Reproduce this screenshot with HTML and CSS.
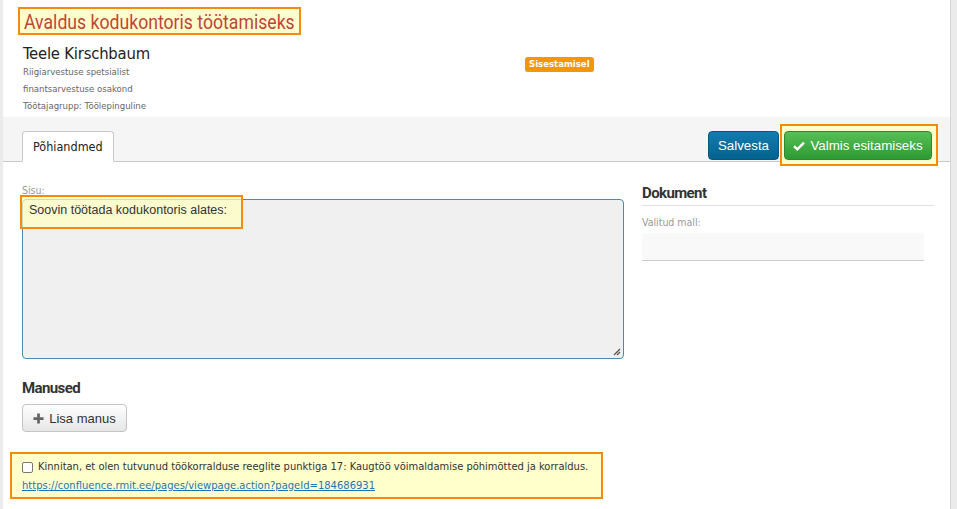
FILE: index.html
```html
<!DOCTYPE html>
<html lang="et">
<head>
<meta charset="utf-8">
<title>Avaldus kodukontoris töötamiseks</title>
<link rel="stylesheet" href="styles.css">
</head>
<body>
<div class="page">
  <header class="header">
    <h1 class="title"><span class="hl title-box"><span class="title-text">Avaldus kodukontoris töötamiseks</span></span></h1>
    <div class="person-row">
      <div class="person">
        <div class="person-name">Teele Kirschbaum</div>
        <div class="person-line">Riigiarvestuse spetsialist</div>
        <div class="person-line">finantsarvestuse osakond</div>
        <div class="person-line">Töötajagrupp: Töölepinguline</div>
      </div>
      <div class="status"><span class="badge">Sisestamisel</span></div>
    </div>
  </header>

  <div class="tabbar">
    <div class="tabs">
      <div class="tab active">Põhiandmed</div>
    </div>
    <div class="actions">
      <button class="btn btn-primary">Salvesta</button>
      <span class="hl actions-box">
        <button class="btn btn-success">
          <svg class="icon-check" viewBox="0 0 12 10" width="12" height="10"><path d="M1 5.2 L4.3 8.3 L11 1.6" fill="none" stroke="#fff" stroke-width="2.4"/></svg>
          Valmis esitamiseks
        </button>
      </span>
    </div>
  </div>

  <div class="content">
    <div class="main-col">
      <label class="field-label">Sisu:</label>
      <div class="textarea">
        <span class="hl ta-box">Soovin töötada kodukontoris alates:</span>
        <svg class="resize" viewBox="0 0 8 8" width="8" height="8"><path d="M7 1 L1 7 M7 4 L4 7" stroke="#555" stroke-width="1.3"/></svg>
      </div>

      <h3 class="section-title">Manused</h3>
      <button class="btn btn-default">
        <svg class="icon-plus" viewBox="0 0 12 12" width="11" height="11"><path d="M6 0.5 V11.5 M0.5 6 H11.5" stroke="#666" stroke-width="3"/></svg>
        Lisa manus
      </button>
    </div>

    <aside class="side-col">
      <h3 class="doc-title">Dokument</h3>
      <label class="field-label">Valitud mall:</label>
      <div class="select-field"></div>
    </aside>
  </div>

  <div class="confirm hl">
    <label class="confirm-line"><span class="checkbox"></span>Kinnitan, et olen tutvunud töökorralduse reeglite punktiga 17: Kaugtöö võimaldamise põhimõtted ja korraldus.</label>
    <a class="confirm-link" href="#">https://confluence.rmit.ee/pages/viewpage.action?pageId=184686931</a>
  </div>
</div>
</body>
</html>
```

FILE: styles.css
```css
* { box-sizing: border-box; }

html, body {
  margin: 0;
  padding: 0;
}

body {
  background: #ebebeb;
  font-family: "DejaVu Sans Condensed", "DejaVu Sans", Verdana, sans-serif;
  color: #333;
  height: 509px;
  overflow: hidden;
}

.page {
  margin-left: 3px;
  width: 948px;
  height: 509px;
  background: #fff;
  border-right: 1px solid #d6d6d6;
}

.hl {
  border: 2px solid #f58a0b;
  background: #ffffcc;
}

/* header */
.header {
  padding: 7px 0 0 15px;
  height: 117px;
}

.title {
  margin: 0;
  font-weight: normal;
  line-height: 0;
}

.title-box {
  display: inline-block;
  width: 283px;
  height: 28px;
  padding: 2px 0 0 4px;
  white-space: nowrap;
  overflow: hidden;
}

.title-text {
  display: inline-block;
  font-family: Roboto, "Liberation Sans", sans-serif;
  font-size: 21px;
  line-height: 23px;
  color: #c0443a;
  transform: scaleX(0.84);
  transform-origin: left center;
}

.person-row {
  display: flex;
  margin-top: 10px;
  padding-left: 5px;
}

.person {
  width: 502px;
}

.person-name {
  font-size: 16.5px;
  letter-spacing: -0.2px;
  color: #222;
  line-height: 18px;
}

.person-line {
  font-size: 9.5px;
  color: #666;
  line-height: 17px;
}

.person-line:first-of-type { margin-top: 3px; }

.status {
  padding-top: 7px;
}

.badge {
  display: inline-block;
  background: #f89406;
  color: #fff;
  font-size: 9.5px;
  font-weight: bold;
  padding: 1px 4px 2px;
  border-radius: 3px;
  line-height: 12px;
}

/* tab bar */
.tabbar {
  display: flex;
  justify-content: space-between;
  align-items: flex-end;
  height: 45px;
  background: #f5f5f5;
  border-bottom: 1px solid #c8c8c8;
  padding: 0 12px 0 19px;
}

.tabs { display: flex; }

.tab {
  height: 31px;
  margin-bottom: -1px;
  padding: 7px 10px 0 10px;
  font-size: 12.5px;
  color: #222;
  background: #fff;
  border: 1px solid #c8c8c8;
  border-bottom-color: #fff;
  border-radius: 4px 4px 0 0;
}

.actions {
  display: flex;
  align-items: flex-start;
  align-self: flex-start;
  margin-top: 7px;
  margin-bottom: -6px;
}

.btn {
  font-family: "Liberation Sans", Arial, sans-serif;
  font-size: 13.3px;
  border-radius: 4px;
  cursor: pointer;
  display: inline-flex;
  align-items: center;
  gap: 5px;
}

.btn-primary {
  margin-top: 7px;
  height: 29px;
  width: 71px;
  justify-content: center;
  padding: 0;
  color: #fff;
  background: linear-gradient(#137bb0, #04628e);
  border: 1px solid #05587f;
  margin-right: 1px;
}

.actions-box {
  display: inline-flex;
  padding: 5px 4px 4px 2px;
}

.btn-success {
  height: 29px;
  width: 148px;
  justify-content: center;
  padding: 0;
  color: #fff;
  background: linear-gradient(#56c056, #2e9a32);
  border: 1px solid #2b8a2e;
}

.icon-check { margin-top: 1px; }

/* content */
.content {
  display: flex;
  padding: 22px 16px 0 19px;
}

.main-col {
  width: 602px;
}

.field-label {
  display: block;
  font-size: 10.5px;
  color: #999;
  line-height: 13px;
}

.textarea {
  position: relative;
  margin-top: 2px;
  height: 160px;
  background: #f0f0f0;
  border: 1px solid #4a8ab8;
  border-radius: 4px;
}

.ta-box {
  position: absolute;
  left: -3px;
  top: -5px;
  width: 223px;
  height: 34px;
  padding: 6px 0 0 7px;
  background: rgba(255, 255, 190, 0.7);
  font-family: "Liberation Sans", Arial, sans-serif;
  font-size: 12.5px;
  color: #333;
}

.resize {
  position: absolute;
  right: 2px;
  bottom: 2px;
}

.section-title,
.doc-title {
  margin: 0;
  font-family: Roboto, "Liberation Sans", sans-serif;
  font-size: 15px;
  font-weight: bold;
  color: #333;
  line-height: 18px;
  letter-spacing: -0.6px;
}

.section-title {
  margin-top: 20px;
}

.btn-default {
  margin-top: 7px;
  height: 28px;
  width: 105px;
  justify-content: center;
  padding: 0;
  color: #333;
  background: linear-gradient(#fff, #e6e6e6);
  border: 1px solid #c4c4c4;
  font-size: 13px;
  gap: 5px;
}

.side-col {
  margin-left: 18px;
  width: 292px;
}

.doc-title {
  padding-bottom: 3px;
  border-bottom: 1px solid #e2e2e2;
}

.side-col .field-label {
  margin-top: 10px;
}

.select-field {
  margin-top: 4px;
  width: 282px;
  height: 28px;
  background: #f9f9f9;
  border-bottom: 1px solid #ccc;
  border-radius: 3px 3px 0 0;
}

/* confirm box */
.confirm {
  margin: 20px 0 0 7px;
  width: 593px;
  height: 47px;
  padding: 5px 0 0 10px;
}

.confirm-line {
  display: flex;
  align-items: center;
  font-size: 11.05px;
  color: #333;
  line-height: 16px;
}

.checkbox {
  display: inline-block;
  width: 11px;
  height: 11px;
  border: 1px solid #777;
  border-radius: 2px;
  background: #fff;
  margin-right: 5px;
}

.confirm-link {
  display: block;
  margin-top: 4px;
  font-size: 11.1px;
  color: #1a75b8;
  line-height: 14px;
}
```
